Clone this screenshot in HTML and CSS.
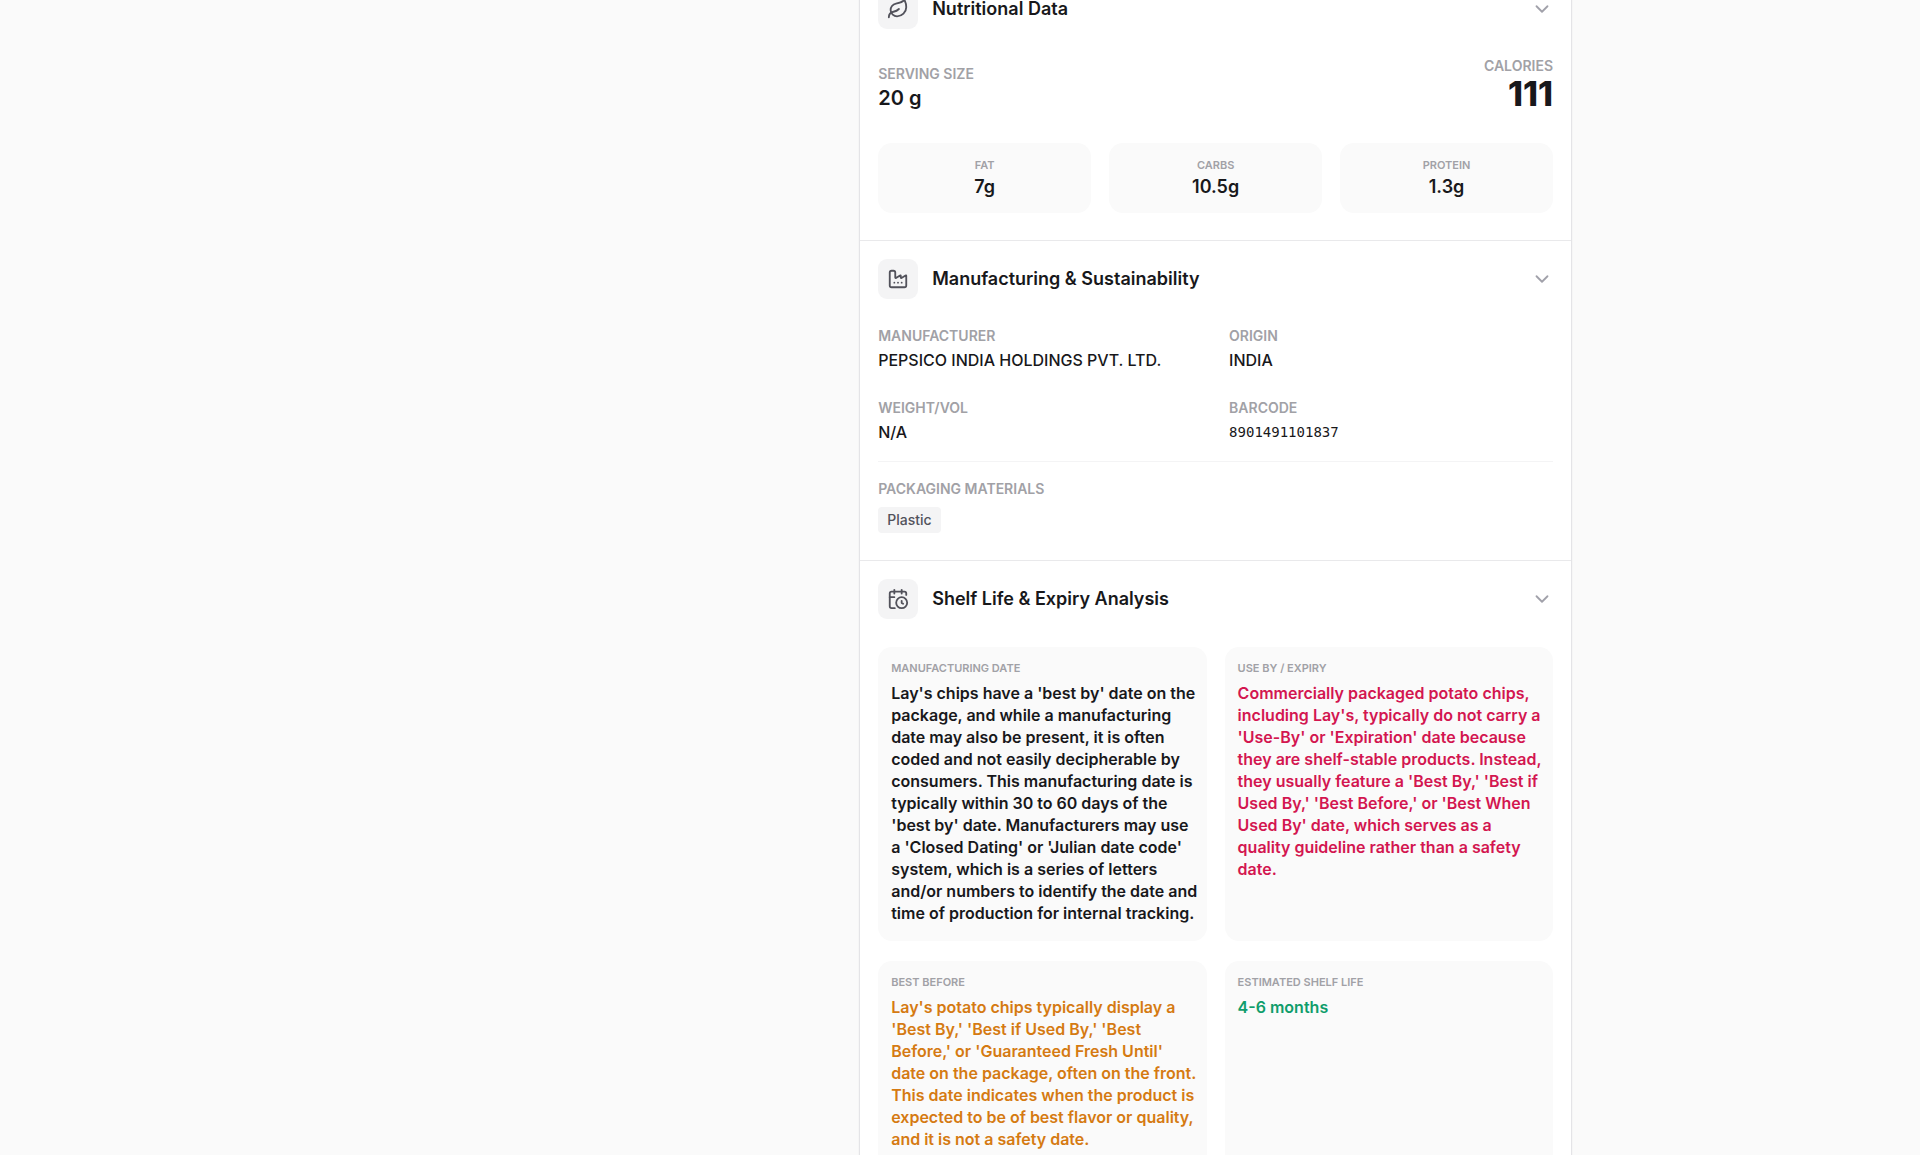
FILE: index.html
```html
<!DOCTYPE html>
<html lang="en">
<head>
<meta charset="utf-8">
<meta name="viewport" content="width=device-width, initial-scale=1">
<title>Product Details</title>
<link rel="stylesheet" href="styles.css">
</head>
<body>
<main class="page">
  <article class="product">

    <section class="section">
      <button class="section-header" type="button" aria-expanded="true">
        <span class="section-icon">
          <svg viewBox="0 0 24 24" aria-hidden="true"><path d="M11 20A7 7 0 0 1 9.8 6.1C15.5 5 17 4.48 19 2c1 2 2 4.18 2 8 0 5.5-4.78 10-10 10Z"/><path d="M2 21c0-3 1.850-5.360 5.080-6C9.500 14.520 12 13 13 12"/></svg>
        </span>
        <span class="section-title">Nutritional Data</span>
        <svg class="chevron" viewBox="0 0 24 24" aria-hidden="true"><path d="m6 9 6 6 6-6"/></svg>
      </button>
      <div class="section-body">
        <dl class="summary">
          <div class="summary-item">
            <dt class="label">Serving Size</dt>
            <dd class="serving">20 g</dd>
          </div>
          <div class="summary-item summary-item-end">
            <dt class="label">Calories</dt>
            <dd class="calories">111</dd>
          </div>
        </dl>
        <dl class="macros">
          <div class="tile macro">
            <dt class="label-small">Fat</dt>
            <dd class="macro-value">7g</dd>
          </div>
          <div class="tile macro">
            <dt class="label-small">Carbs</dt>
            <dd class="macro-value">10.5g</dd>
          </div>
          <div class="tile macro">
            <dt class="label-small">Protein</dt>
            <dd class="macro-value">1.3g</dd>
          </div>
        </dl>
      </div>
    </section>

    <section class="section">
      <button class="section-header" type="button" aria-expanded="true">
        <span class="section-icon">
          <svg viewBox="0 0 24 24" aria-hidden="true"><path d="M12 16h.01"/><path d="M16 16h.01"/><path d="M3 19a2 2 0 0 0 2 2h14a2 2 0 0 0 2-2V8.500a.5.5 0 0 0-.769-.422l-4.462 2.844A.5.5 0 0 1 15 10.500v-2a.5.5 0 0 0-.769-.422L9.770 10.922A.5.5 0 0 1 9 10.500V5a2 2 0 0 0-2-2H5a2 2 0 0 0-2 2z"/><path d="M8 16h.01"/></svg>
        </span>
        <span class="section-title">Manufacturing &amp; Sustainability</span>
        <svg class="chevron" viewBox="0 0 24 24" aria-hidden="true"><path d="m6 9 6 6 6-6"/></svg>
      </button>
      <div class="section-body">
        <dl class="facts">
          <div>
            <dt class="label">Manufacturer</dt>
            <dd class="fact-value">PEPSICO INDIA HOLDINGS PVT. LTD.</dd>
          </div>
          <div>
            <dt class="label">Origin</dt>
            <dd class="fact-value">INDIA</dd>
          </div>
          <div>
            <dt class="label">Weight/Vol</dt>
            <dd class="fact-value">N/A</dd>
          </div>
          <div>
            <dt class="label">Barcode</dt>
            <dd class="fact-value barcode">8901491101837</dd>
          </div>
        </dl>
        <div class="packaging">
          <h3 class="label">Packaging Materials</h3>
          <ul class="tags">
            <li class="tag">Plastic</li>
          </ul>
        </div>
      </div>
    </section>

    <section class="section">
      <button class="section-header" type="button" aria-expanded="true">
        <span class="section-icon">
          <svg viewBox="0 0 24 24" aria-hidden="true"><path d="M21 7.500V6a2 2 0 0 0-2-2H5a2 2 0 0 0-2 2v14a2 2 0 0 0 2 2h3.500"/><path d="M16 2v4"/><path d="M8 2v4"/><path d="M3 10h5"/><path d="M16 14v2.200l1.600 1"/><circle cx="16" cy="16" r="6"/></svg>
        </span>
        <span class="section-title">Shelf Life &amp; Expiry Analysis</span>
        <svg class="chevron" viewBox="0 0 24 24" aria-hidden="true"><path d="m6 9 6 6 6-6"/></svg>
      </button>
      <div class="section-body">
        <dl class="dates">
          <div class="tile date">
            <dt class="label-small">Manufacturing Date</dt>
            <dd class="date-text">Lay's chips have a 'best by' date on the package, and while a manufacturing date may also be present, it is often coded and not easily decipherable by consumers. This manufacturing date is typically within 30 to 60 days of the 'best by' date. Manufacturers may use a 'Closed Dating' or 'Julian date code' system, which is a series of letters and/or numbers to identify the date and time of production for internal tracking.</dd>
          </div>
          <div class="tile date">
            <dt class="label-small">Use By / Expiry</dt>
            <dd class="date-text expiry">Commercially packaged potato chips, including Lay's, typically do not carry a 'Use-By' or 'Expiration' date because they are shelf-stable products. Instead, they usually feature a 'Best By,' 'Best if Used By,' 'Best Before,' or 'Best When Used By' date, which serves as a quality guideline rather than a safety date.</dd>
          </div>
          <div class="tile date">
            <dt class="label-small">Best Before</dt>
            <dd class="date-text best-before">Lay's potato chips typically display a 'Best By,' 'Best if Used By,' 'Best Before,' or 'Guaranteed Fresh Until' date on the package, often on the front. This date indicates when the product is expected to be of best flavor or quality, and it is not a safety date.</dd>
          </div>
          <div class="tile date">
            <dt class="label-small">Estimated Shelf Life</dt>
            <dd class="date-text shelf-life">4-6 months</dd>
          </div>
        </dl>
      </div>
    </section>

  </article>
</main>
</body>
</html>
```
FILE: styles.css
```css
* {
  box-sizing: border-box;
}

body {
  margin: 0;
  background: #fafafa;
  color: #18181b;
  font-family: Inter, "Liberation Sans", sans-serif;
  font-size: 16px;
  line-height: 22px;
  overflow: hidden;
}

dl,
dd,
ul,
h3 {
  margin: 0;
  padding: 0;
}

.page {
  display: grid;
  grid-template-columns: 2fr 3fr;
  gap: 36px;
  max-width: 1224px;
  margin: 0 auto;
}

.product {
  grid-column: 2;
  margin-top: -30px;
  background: #ffffff;
  border: 1px solid #e4e4e7;
  box-shadow: 0 1px 2px rgba(0, 0, 0, 0.05);
}

.section {
  padding: 18px 18px 27px;
}

.section + .section {
  border-top: 1px solid #e9e9eb;
}

.section-header {
  display: flex;
  align-items: center;
  gap: 14px;
  width: 100%;
  padding: 0;
  border: 0;
  background: none;
  color: inherit;
  font: inherit;
  text-align: left;
  cursor: pointer;
}

.section-icon {
  display: flex;
  align-items: center;
  justify-content: center;
  width: 40px;
  height: 40px;
  border-radius: 9px;
  background: #f4f4f5;
  color: #52525b;
}

svg {
  fill: none;
  stroke: currentColor;
  stroke-width: 2;
  stroke-linecap: round;
  stroke-linejoin: round;
}

.section-icon svg {
  width: 22px;
  height: 22px;
}

.section-title {
  flex: 1;
  font-size: 18px;
  font-weight: 600;
  line-height: 26px;
}

.chevron {
  width: 22px;
  height: 22px;
  color: #a1a1aa;
}

.section-body {
  padding-top: 28px;
}

.label,
.label-small {
  color: #a1a1a6;
  font-weight: 600;
  text-transform: uppercase;
}

.label {
  font-size: 14px;
  line-height: 18px;
}

.label-small {
  font-size: 11px;
  line-height: 16px;
}

.summary {
  display: flex;
  align-items: flex-end;
  justify-content: space-between;
  margin-bottom: 32px;
}

.summary-item {
  display: flex;
  flex-direction: column;
  gap: 2px;
}

.summary-item-end {
  text-align: right;
}

.serving {
  font-size: 20px;
  font-weight: 600;
  line-height: 26px;
}

.calories {
  font-size: 34px;
  font-weight: 800;
  line-height: 34px;
}

.tile {
  padding: 14px;
  border-radius: 14px;
  background: #fafafa;
}

.macros {
  display: grid;
  grid-template-columns: repeat(3, 1fr);
  gap: 18px;
}

.macro {
  text-align: center;
}

.macro-value {
  margin-top: 2px;
  font-size: 18px;
  font-weight: 600;
  line-height: 24px;
}

.facts {
  display: grid;
  grid-template-columns: 1fr 1fr;
  gap: 28px 27px;
}

.fact-value {
  margin-top: 4px;
  font-weight: 500;
}

.barcode {
  font-family: "DejaVu Sans Mono", "Liberation Mono", monospace;
  font-size: 14px;
  font-weight: 400;
}

.packaging {
  margin-top: 18px;
  padding-top: 18px;
  border-top: 1px solid #f4f4f5;
}

.tags {
  display: flex;
  flex-wrap: wrap;
  gap: 9px;
  margin-top: 9px;
  list-style: none;
}

.tag {
  padding: 4px 9px;
  border-radius: 4px;
  background: #f4f4f5;
  color: #52525b;
  font-size: 14px;
  font-weight: 500;
  line-height: 18px;
}

.dates {
  display: grid;
  grid-template-columns: 1fr 1fr;
  gap: 20px 18px;
}

.date {
  padding: 13px 9px 17px 13px;
}

.date-text {
  margin-top: 6px;
  font-weight: 600;
}

.expiry {
  color: #d31650;
}

.best-before {
  color: #d57a12;
}

.shelf-life {
  color: #0f9d6b;
}
```
